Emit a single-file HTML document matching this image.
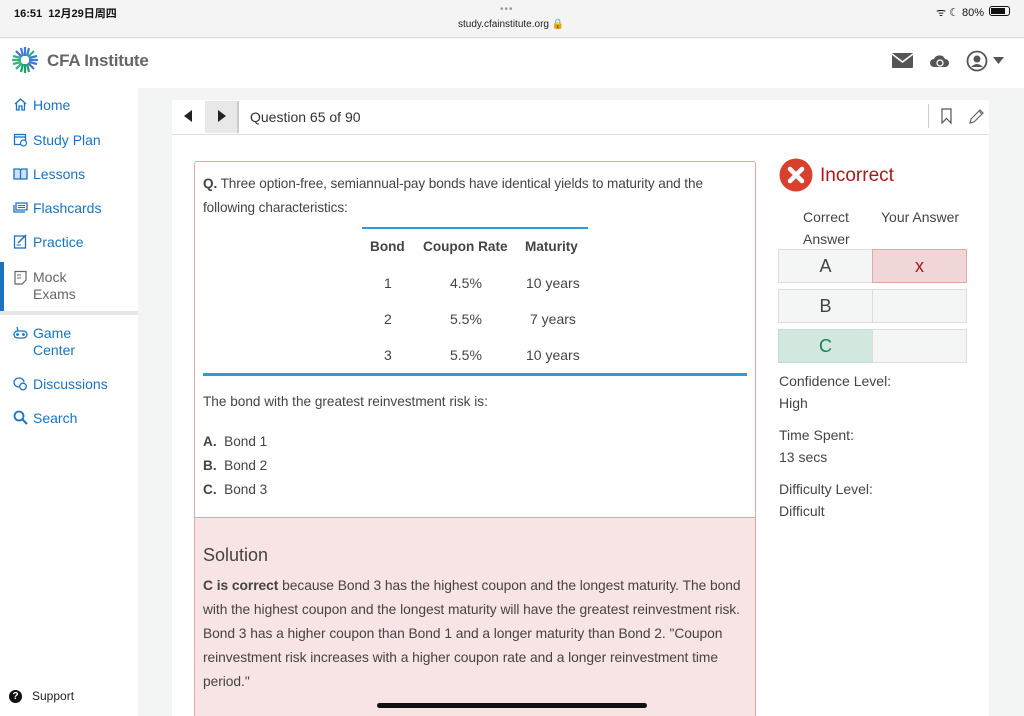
<!DOCTYPE html>
<html style="width:1024px;height:716px;overflow:hidden"><head><meta charset="utf-8"><style>
*{margin:0;padding:0;box-sizing:border-box}
body{width:1024px;height:716px;overflow:hidden;background:#f3f4f4;font-family:"Liberation Sans","Noto Sans CJK SC",sans-serif;color:#444;position:relative}
.a{position:absolute}
.nav{left:33px;font-size:14px;color:#1a73c0;line-height:17px}
.ic{left:13px;width:15px;height:15px}
.cell{position:absolute;height:34px;border:1px solid #ddd;background:#f4f5f5;text-align:center;line-height:32px;font-size:18px}
.lbl{left:779px;font-size:14px;color:#444}
</style></head><body>
<div class="a" style="left:0;top:0;width:1024px;height:38px;background:#f4f4f4;border-bottom:1px solid #ddd"></div>
<div class="a" style="left:14px;top:5px;font-size:11px;font-weight:bold;color:#111">16:51&nbsp;&nbsp;12月29日周四</div>
<div class="a" style="left:500px;top:4px;font-size:10px;color:#999;letter-spacing:1px">•••</div>
<div class="a" style="left:458px;top:19px;font-size:10px;color:#222">study.cfainstitute.org 🔒</div>
<div class="a" style="left:936px;top:5px;font-size:11px;color:#111">ᯤ ☾ 80%</div>
<div class="a" style="left:989px;top:6px;width:21px;height:10px;border:1px solid #111;border-radius:3px;padding:1px"><div style="width:80%;height:100%;background:#111"></div></div>
<div class="a" style="left:0;top:39px;width:1024px;height:49px;background:#fff"></div>
<svg class="a" style="left:9px;top:44px" width="32" height="32" viewBox="0 0 32 32">
<g stroke-width="2.2" fill="none">
<path d="M16 3 L16 12 M12 4 L14 12 M20 4 L18 12" stroke="#3b7dd8"/>
<path d="M3 16 L12 16 M4 12 L12 14 M4 20 L12 18" stroke="#36b37e"/>
<path d="M29 16 L20 16 M28 12 L20 14 M28 20 L20 18" stroke="#3b7dd8"/>
<path d="M16 29 L16 20 M12 28 L14 20 M20 28 L18 20" stroke="#1aa06d"/>
<path d="M7 7 L13 13 M25 25 L19 19" stroke="#5566cc"/>
<path d="M25 7 L19 13 M7 25 L13 19" stroke="#2bb08a"/>
</g></svg>
<div class="a" style="left:47px;top:51px;font-size:17px;font-weight:bold;color:#666;letter-spacing:-0.2px">CFA Institute</div>
<svg class="a" style="left:892px;top:53px" width="21" height="15"><rect width="21" height="15" rx="1" fill="#555"/><path d="M0 1 L10.5 9 L21 1" stroke="#fff" stroke-width="1.5" fill="none"/></svg>
<svg class="a" style="left:930px;top:53px" width="19" height="15"><path d="M4 14 A4 4 0 0 1 4 6 A6 6 0 0 1 15 6 A4 4 0 0 1 15 14Z" fill="#555"/><circle cx="10" cy="10" r="3" stroke="#fff" stroke-width="1.3" fill="none"/></svg>
<svg class="a" style="left:966px;top:50px" width="22" height="22"><circle cx="11" cy="11" r="9.5" stroke="#555" stroke-width="1.8" fill="none"/><circle cx="11" cy="9" r="3.5" fill="#555"/><path d="M5 17 Q11 11 17 17" fill="#555"/></svg>
<svg class="a" style="left:993px;top:57px" width="11" height="7"><path d="M0 0 L11 0 L5.5 7Z" fill="#555"/></svg>
<div class="a" style="left:0;top:88px;width:138px;height:628px;background:#fff"></div>
<div class="a" style="left:0;top:262px;width:4px;height:50px;background:#1a73c0"></div>
<div class="a" style="left:0;top:311px;width:138px;height:4px;background:#e5e6e6"></div>
<svg class="a ic" style="top:97px" viewBox="0 0 15 15"><path d="M2 7 L7.5 2 L13 7 M3.5 6 V13 H6 V9 H9 V13 H11.5 V6" stroke="#1a73c0" stroke-width="1.3" fill="none"/></svg>
<div class="a nav" style="top:97px">Home</div>
<svg class="a ic" style="top:132px" viewBox="0 0 15 15"><rect x="1.5" y="2.5" width="11" height="10" stroke="#1a73c0" stroke-width="1.3" fill="none"/><path d="M1.5 5 H12.5" stroke="#1a73c0" stroke-width="1.3"/><circle cx="10.5" cy="11" r="3" fill="#fff" stroke="#1a73c0" stroke-width="1.2"/></svg>
<div class="a nav" style="top:132px">Study Plan</div>
<svg class="a ic" style="top:166px" viewBox="0 0 15 15"><path d="M1 3 H6.5 L7.5 4 L8.5 3 H14 V13 H1Z M7.5 4 V13" stroke="#1a73c0" stroke-width="1.3" fill="#cfe2f5"/></svg>
<div class="a nav" style="top:166px">Lessons</div>
<svg class="a ic" style="top:200px" viewBox="0 0 15 15"><path d="M3 3 H14 V10 H3Z M1 5 V12 H12" stroke="#1a73c0" stroke-width="1.3" fill="none"/><path d="M5 5.5 H12 M5 7.5 H12" stroke="#1a73c0"/></svg>
<div class="a nav" style="top:200px">Flashcards</div>
<svg class="a ic" style="top:234px" viewBox="0 0 15 15"><rect x="1.5" y="2" width="11" height="12" stroke="#1a73c0" stroke-width="1.3" fill="none"/><path d="M5 9 L13 1" stroke="#1a73c0" stroke-width="1.5"/><path d="M3.5 11 H8" stroke="#1a73c0"/></svg>
<div class="a nav" style="top:234px">Practice</div>
<svg class="a ic" style="top:270px" viewBox="0 0 15 15"><path d="M2 1.5 H13 V10 L9 14 H2Z" stroke="#666" stroke-width="1.2" fill="none"/><path d="M4 5 H8 M4 8 H8" stroke="#666"/></svg>
<div class="a nav" style="top:269px;color:#666">Mock<br>Exams</div>
<svg class="a ic" style="top:325px" viewBox="0 0 15 15"><rect x="1" y="6" width="13" height="7" rx="3.5" stroke="#1a73c0" stroke-width="1.3" fill="none"/><path d="M5 6 L4 2" stroke="#1a73c0" stroke-width="1.2"/><circle cx="4.5" cy="9.5" r="1.4" fill="#1a73c0"/><circle cx="10.5" cy="9.5" r="1.4" fill="#1a73c0"/></svg>
<div class="a nav" style="top:325px">Game<br>Center</div>
<svg class="a ic" style="top:376px" viewBox="0 0 15 15"><path d="M6 11 A5 4.5 0 1 1 11 6" stroke="#1a73c0" stroke-width="1.3" fill="none"/><circle cx="10" cy="10.5" r="3.3" stroke="#1a73c0" stroke-width="1.3" fill="none"/></svg>
<div class="a nav" style="top:376px">Discussions</div>
<svg class="a ic" style="top:410px" viewBox="0 0 15 15"><circle cx="6" cy="6" r="4.5" stroke="#1a73c0" stroke-width="1.8" fill="none"/><path d="M9.5 9.5 L14 14" stroke="#1a73c0" stroke-width="2"/></svg>
<div class="a nav" style="top:410px">Search</div>
<div class="a" style="left:9px;top:690px;width:13px;height:13px;border-radius:50%;background:#111;color:#fff;font-size:10px;font-weight:bold;text-align:center;line-height:13px">?</div>
<div class="a" style="left:32px;top:689px;font-size:12px;color:#222">Support</div>
<div class="a" style="left:172px;top:100px;width:817px;height:616px;background:#fff"></div>
<div class="a" style="left:172px;top:134px;width:817px;height:1px;background:#ddd"></div>
<div class="a" style="left:205px;top:101px;width:34px;height:32px;background:#e8e8e8;border-right:2px solid #ccc"></div>
<svg class="a" style="left:184px;top:110px" width="8" height="12"><path d="M8 0 V12 L0 6Z" fill="#222"/></svg>
<svg class="a" style="left:218px;top:110px" width="8" height="12"><path d="M0 0 V12 L8 6Z" fill="#222"/></svg>
<div class="a" style="left:250px;top:109px;font-size:14px;color:#333">Question 65 of 90</div>
<div class="a" style="left:928px;top:104px;width:1px;height:24px;background:#ccc"></div>
<svg class="a" style="left:941px;top:108px" width="11" height="16"><path d="M1 1 H10 V15 L5.5 10.5 L1 15Z" stroke="#555" stroke-width="1.2" fill="none"/></svg>
<svg class="a" style="left:969px;top:108px" width="16" height="16"><path d="M1 15 L2 11 L11 2 L14 5 L5 14Z M10 3 L13 6" stroke="#666" stroke-width="1.2" fill="none"/></svg>
<div class="a" style="left:194px;top:161px;width:562px;height:555px;border:1px solid #e3a7a7;border-bottom:none;border-radius:3px 3px 0 0;background:#fff;overflow:hidden">
<div style="position:absolute;left:8px;top:10px;width:545px;font-size:13.6px;letter-spacing:-0.1px;line-height:24px;color:#444"><b>Q.</b> Three option-free, semiannual-pay bonds have identical yields to maturity and the following characteristics:</div>
<div style="position:absolute;left:167px;top:65px;width:226px;height:2px;background:#2b9be0"></div>
<div style="position:absolute;left:8px;top:211px;width:544px;height:3px;background:#2b9be0"></div>
<div style="position:absolute;left:175px;top:77px;font-size:13.6px;font-weight:bold;color:#444">Bond</div>
<div style="position:absolute;left:228px;top:77px;font-size:13.6px;font-weight:bold;color:#444">Coupon Rate</div>
<div style="position:absolute;left:330px;top:77px;font-size:13.6px;font-weight:bold;color:#444">Maturity</div>
<div style="position:absolute;left:189px;top:113px;font-size:14px">1</div><div style="position:absolute;left:255px;top:113px;font-size:14px">4.5%</div><div style="position:absolute;left:331px;top:113px;font-size:14px">10 years</div>
<div style="position:absolute;left:189px;top:149px;font-size:14px">2</div><div style="position:absolute;left:255px;top:149px;font-size:14px">5.5%</div><div style="position:absolute;left:335px;top:149px;font-size:14px">7 years</div>
<div style="position:absolute;left:189px;top:185px;font-size:14px">3</div><div style="position:absolute;left:255px;top:185px;font-size:14px">5.5%</div><div style="position:absolute;left:331px;top:185px;font-size:14px">10 years</div>
<div style="position:absolute;left:8px;top:232px;font-size:13.6px">The bond with the greatest reinvestment risk is:</div>
<div style="position:absolute;left:8px;top:268px;font-size:13.6px;line-height:24px"><b>A.</b>&nbsp; Bond 1<br><b>B.</b>&nbsp; Bond 2<br><b>C.</b>&nbsp; Bond 3</div>
<div style="position:absolute;left:0;top:355px;width:562px;height:200px;background:#f8e4e4;border-top:1px solid #e3a7a7"></div>
<div style="position:absolute;left:8px;top:383px;font-size:18px;color:#444">Solution</div>
<div style="position:absolute;left:8px;top:412px;width:546px;font-size:13.8px;letter-spacing:-0.05px;line-height:24px;color:#444"><b>C is correct</b> because Bond 3 has the highest coupon and the longest maturity. The bond with the highest coupon and the longest maturity will have the greatest reinvestment risk. Bond 3 has a higher coupon than Bond 1 and a longer maturity than Bond 2. "Coupon reinvestment risk increases with a higher coupon rate and a longer reinvestment time period."</div>
</div>
<div class="a" style="left:377px;top:703px;width:270px;height:5px;border-radius:3px;background:#111"></div>
<svg class="a" style="left:779px;top:158px" width="34" height="34"><circle cx="17" cy="17" r="16.5" fill="#d9412f"/><path d="M11 11 L23 23 M23 11 L11 23" stroke="#fff" stroke-width="4.5" stroke-linecap="round"/></svg>
<div class="a" style="left:820px;top:165px;font-size:19px;color:#b3131b">Incorrect</div>
<div class="a" style="left:803px;top:206px;font-size:14px;line-height:22px">Correct<br>Answer</div>
<div class="a" style="left:881px;top:209px;font-size:14px">Your Answer</div>
<div class="cell" style="left:778px;top:249px;width:95px">A</div>
<div class="cell" style="left:872px;top:249px;width:95px;background:#f1d6d8;border-color:#e3a7a7;color:#a4161a">x</div>
<div class="cell" style="left:778px;top:289px;width:95px">B</div>
<div class="cell" style="left:872px;top:289px;width:95px"></div>
<div class="cell" style="left:778px;top:329px;width:95px;background:#d2e8df;border-color:#bfe0d2;color:#16805a">C</div>
<div class="cell" style="left:872px;top:329px;width:95px"></div>
<div class="a lbl" style="top:370px;line-height:22px">Confidence Level:<br>High</div>
<div class="a lbl" style="top:424px;line-height:22px">Time Spent:<br>13 secs</div>
<div class="a lbl" style="top:478px;line-height:22px">Difficulty Level:<br>Difficult</div>
</body></html>
